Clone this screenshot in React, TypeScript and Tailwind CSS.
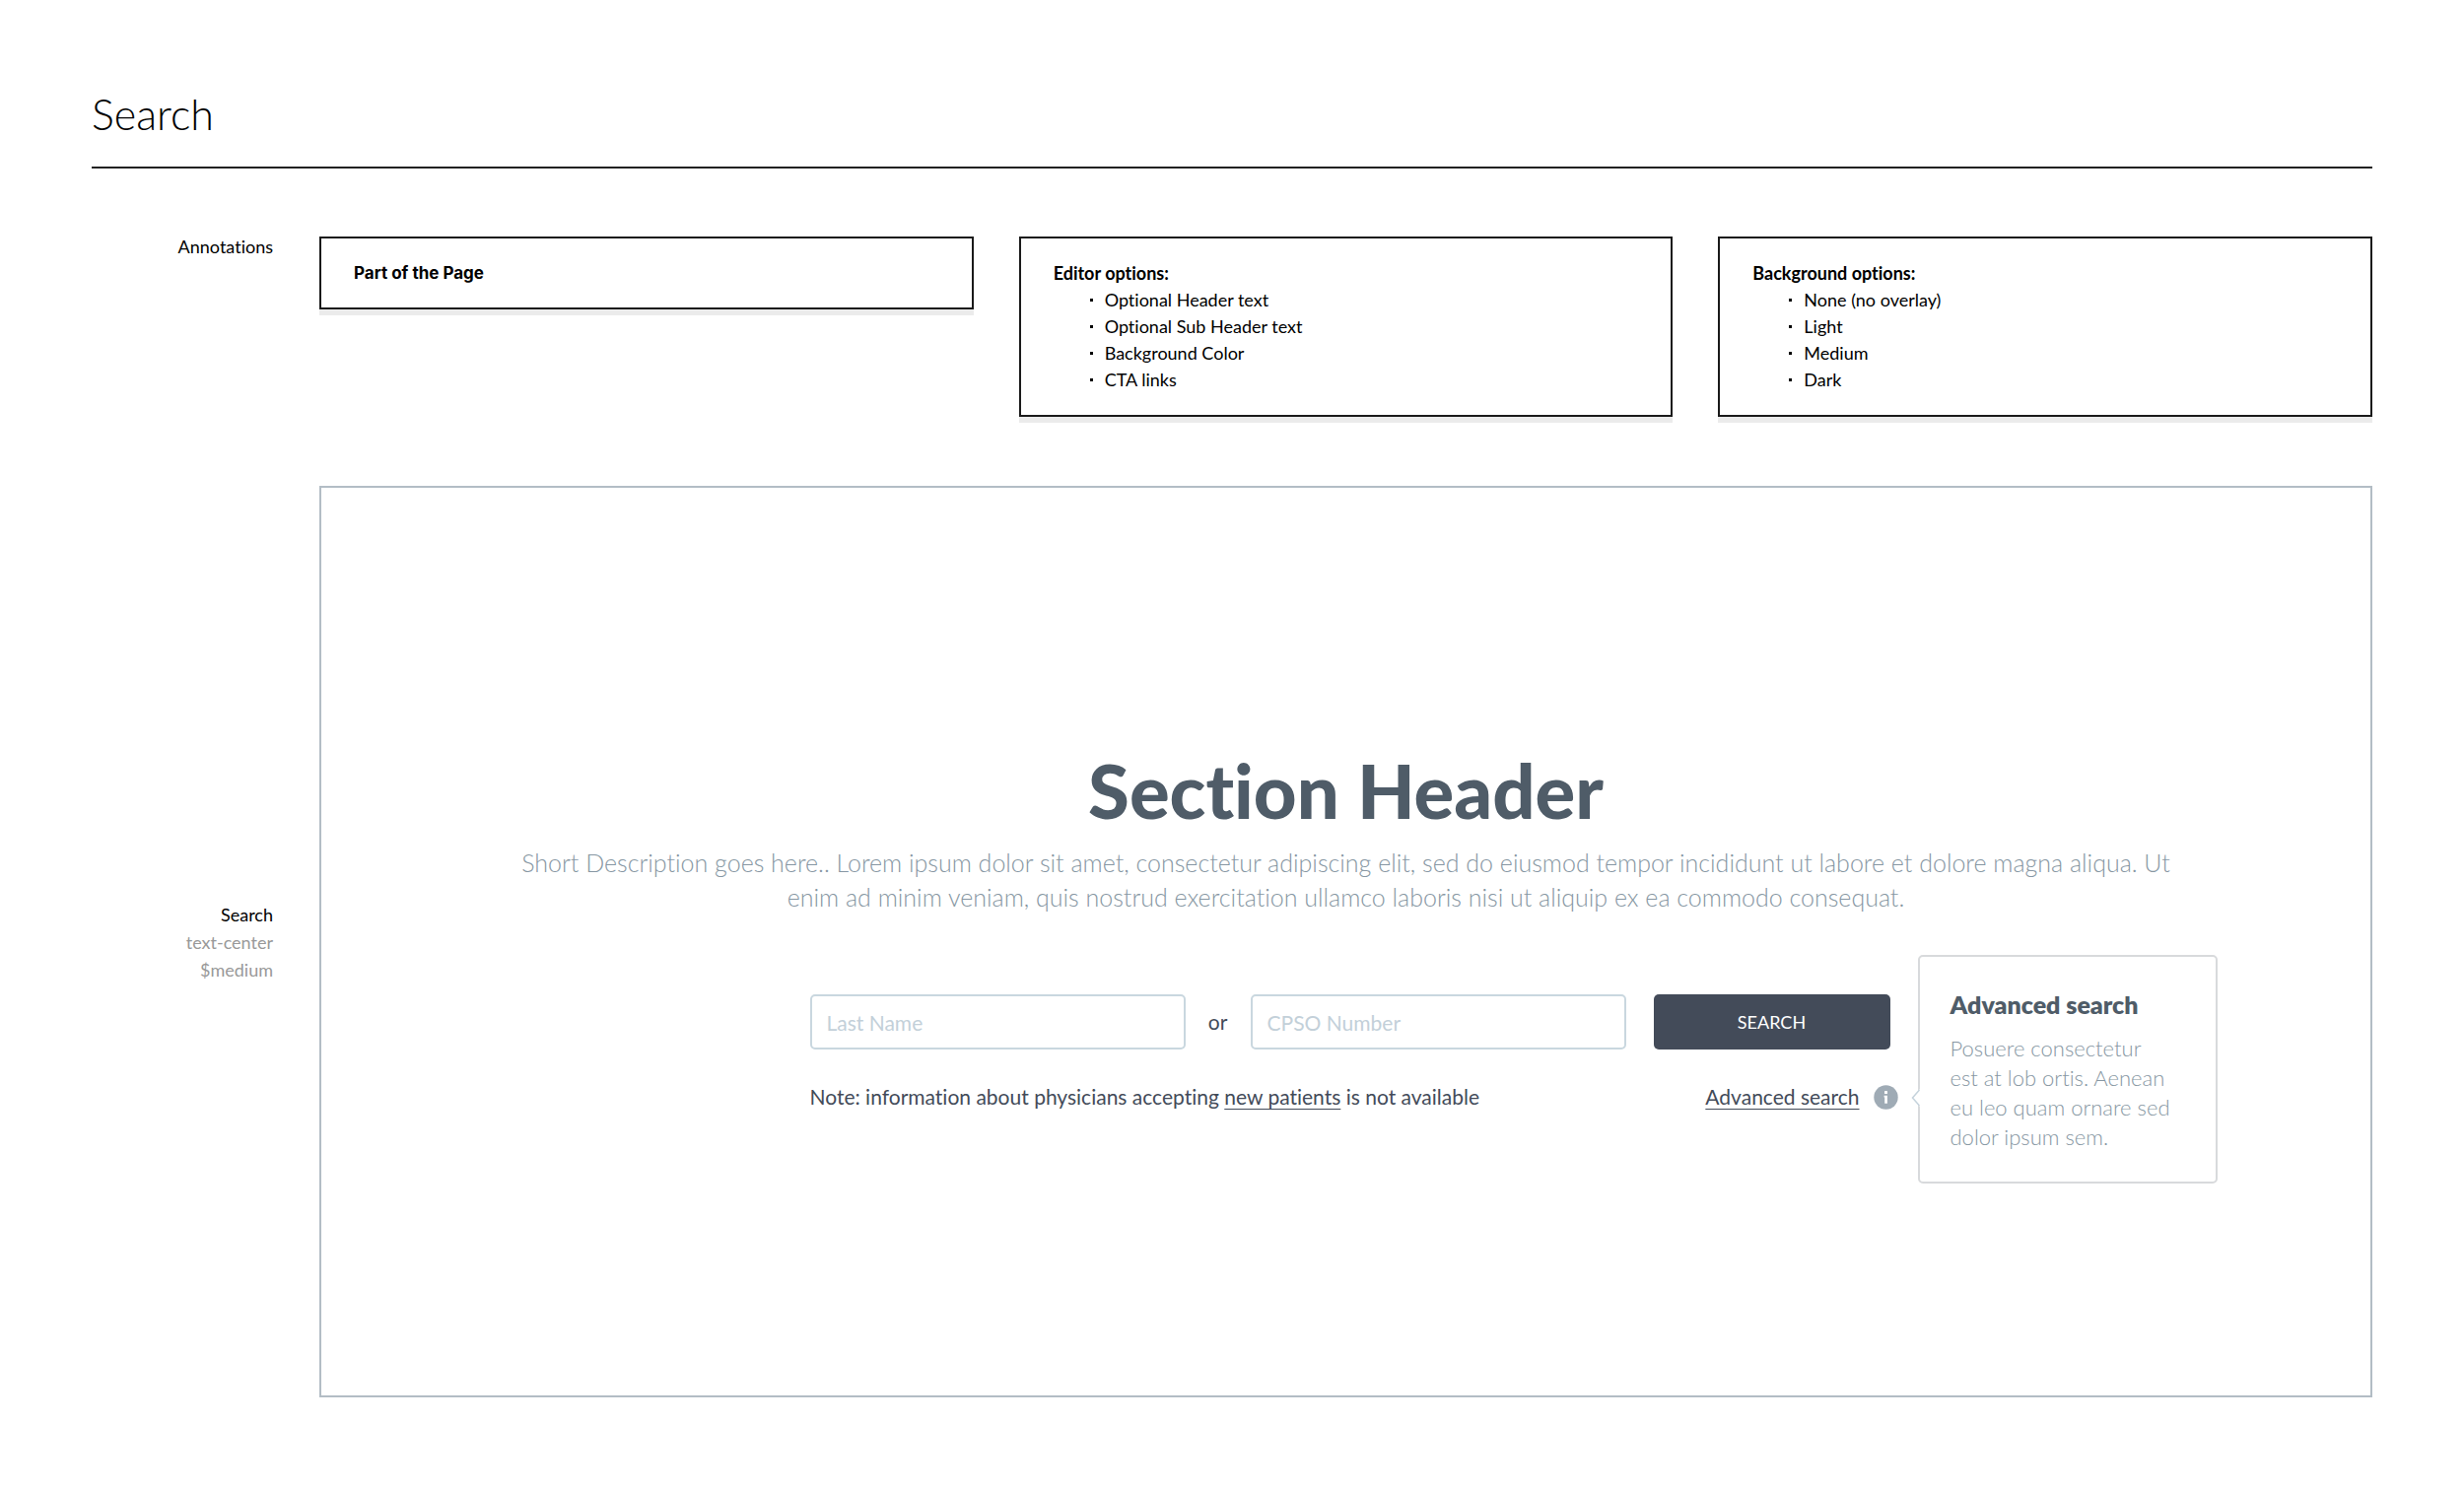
import React from "react";

function Annotation({ title, items, titleClass = "text-lg" }: { title: string; items?: string[]; titleClass?: string }) {
  return (
    <article className="border-2 border-[#1a1a1a] bg-white px-[33px] py-[21px] text-lg leading-7 text-black shadow-[0_6px_0_#ebebeb]">
      <h2 className={`leading-7 font-bold ${titleClass}`}>{title}</h2>
      {items && (
        <ul className="pb-px leading-[27px]">
          {items.map((item) => (
            <li key={item} className="flex items-center gap-3 pl-[37px]">
              <span className="size-[3px] bg-black" />
              {item}
            </li>
          ))}
        </ul>
      )}
    </article>
  );
}

function InfoIcon() {
  return (
    <svg viewBox="0 0 25 25" className="size-[25px]" aria-hidden="true">
      <circle cx="12.5" cy="12.5" r="12.2" fill="#9fabb5" />
      <rect x="11" y="6" width="3" height="3" rx="0.6" fill="#fff" />
      <path d="M10.6 10.7h3.3v8h-2.7v-6.3h-.6z" fill="#fff" />
    </svg>
  );
}

function Field({ id, label }: { id: string; label: string }) {
  return (
    <input
      id={id}
      type="text"
      aria-label={label}
      placeholder={label}
      className="h-14 w-[381px] rounded-[5px] border-2 border-[#c9d7df] bg-white px-[15px] text-[21px] text-[#434b59] outline-none placeholder:text-[#c3d0d9]"
    />
  );
}

function Popover() {
  return (
    <aside className="absolute top-1/2 left-full z-10 ml-5 w-[304px] -translate-y-[144px] rounded-[5px] border-2 border-[#d8dadc] bg-white px-[31px] pt-[32px] pb-[30px]">
      <svg viewBox="0 0 9 18" className="absolute top-[134px] -left-[9px] h-[18px] w-[9px]" aria-hidden="true">
        <path d="M9 0v18L1 9z" fill="#fff" />
        <path d="M8.5 1L1.5 9l7 8" fill="none" stroke="#c5d3dc" strokeWidth="1.5" />
      </svg>
      <h3 className="text-[25px] leading-8 font-extrabold text-[#4f5c68]">Advanced search</h3>
      <p className="mt-[14px] text-[22px] leading-[30px] font-light text-[#8797a3]">
        Posuere consectetur
        <br />
        est at lob ortis. Aenean
        <br />
        eu leo quam ornare sed
        <br />
        dolor ipsum sem.
      </p>
    </aside>
  );
}

export default function App() {
  return (
    <div className="bg-white px-[93px] pt-[88px] pb-[94px] font-['Lato',sans-serif] text-black [font-variant-ligatures:none]">
      <header className="border-b-2 border-[#222] pb-[25px]">
        <h1 className="text-[43px] leading-14 font-light">Search</h1>
      </header>

      <div className="mt-[69px] grid grid-cols-[185px_minmax(0,1fr)] gap-x-[46px] gap-y-[70px]">
        <p className="pr-px text-right text-lg leading-5">Annotations</p>
        <section className="grid grid-cols-3 items-start gap-[46px]">
          <Annotation title="Part of the Page" titleClass="font-['Inter',sans-serif] text-[17px]" />
          <Annotation
            title="Editor options:"
            items={["Optional Header text", "Optional Sub Header text", "Background Color", "CTA links"]}
          />
          <Annotation title="Background options:" items={["None (no overlay)", "Light", "Medium", "Dark"]} />
        </section>

        <div className="self-center pr-px text-right text-lg leading-7 text-[#999]">
          <p className="text-black">Search</p>
          <p>text-center</p>
          <p>$medium</p>
        </div>
        <main className="flex flex-col items-center border-2 border-[#b3bdc5] bg-white pt-[259px] pb-[287px]">
          <h2 className="text-[76px] leading-24 font-black text-[#4f5c68]">Section Header</h2>
          <p className="mt-2 text-center text-[25px] leading-[35px] font-light text-[#8797a3]">
            Short Description goes here.. Lorem ipsum dolor sit amet, consectetur adipiscing elit, sed do eiusmod tempor
            incididunt ut labore et dolore magna aliqua. Ut
            <br />
            enim ad minim veniam, quis nostrud exercitation ullamco laboris nisi ut aliquip ex ea commodo consequat.
          </p>

          <form className="mt-[81px] ml-2 text-[21px] text-[#434b59]" onSubmit={(e) => e.preventDefault()}>
            <div className="flex items-center">
              <Field id="last-name" label="Last Name" />
              <span className="w-[66px] text-center">or</span>
              <Field id="cpso-number" label="CPSO Number" />
              <button
                type="submit"
                className="ml-7 h-14 w-60 rounded-[5px] bg-[#434b59] text-lg text-white"
              >
                SEARCH
              </button>
            </div>
            <div className="mt-8 flex items-center justify-between leading-8">
              <p>
                Note: information about physicians accepting{" "}
                <a href="#new-patients" className="underline decoration-1 underline-offset-4">
                  new patients
                </a>{" "}
                is not available
              </p>
              <div className="relative -mr-2 flex items-center gap-[14px]">
                <a href="#advanced" className="underline decoration-1 underline-offset-4">
                  Advanced search
                </a>
                <button type="button" aria-label="About advanced search">
                  <InfoIcon />
                </button>
                <Popover />
              </div>
            </div>
          </form>
        </main>
      </div>
    </div>
  );
}
